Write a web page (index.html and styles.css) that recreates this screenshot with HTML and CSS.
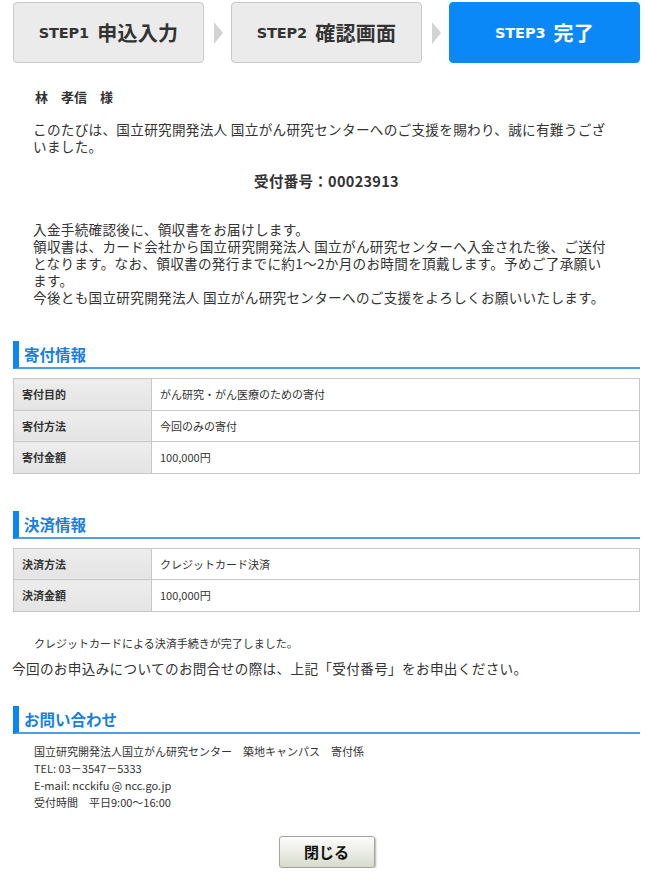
FILE: index.html
```html
<!DOCTYPE html>
<html lang="ja">
<head>
<meta charset="utf-8">
<title>完了</title>
<link rel="stylesheet" href="styles.css">
</head>
<body>
<div class="page">
  <ol class="steps">
    <li class="step"><span class="step-no">STEP1</span><span class="step-name">申込入力</span></li>
    <li class="arrow" aria-hidden="true"></li>
    <li class="step"><span class="step-no">STEP2</span><span class="step-name">確認画面</span></li>
    <li class="arrow" aria-hidden="true"></li>
    <li class="step step-current"><span class="step-no">STEP3</span><span class="step-name">完了</span></li>
  </ol>

  <div class="intro">
    <p class="name">林　孝信　様</p>
    <p class="text">このたびは、国立研究開発法人 国立がん研究センターへのご支援を賜わり、誠に有難うござ<br>いました。</p>
    <p class="receipt">受付番号：00023913</p>
    <p class="text notice">入金手続確認後に、領収書をお届けします。<br>領収書は、カード会社から国立研究開発法人 国立がん研究センターへ入金された後、ご送付<br>となります。なお、領収書の発行までに約1～2か月のお時間を頂戴します。予めご了承願い<br>ます。<br>今後とも国立研究開発法人 国立がん研究センターへのご支援をよろしくお願いいたします。</p>
  </div>

  <h2 class="section-title first">寄付情報</h2>
  <table class="info">
    <tr><th>寄付目的</th><td>がん研究・がん医療のための寄付</td></tr>
    <tr><th>寄付方法</th><td>今回のみの寄付</td></tr>
    <tr><th>寄付金額</th><td>100,000円</td></tr>
  </table>

  <h2 class="section-title">決済情報</h2>
  <table class="info">
    <tr><th>決済方法</th><td>クレジットカード決済</td></tr>
    <tr><th>決済金額</th><td>100,000円</td></tr>
  </table>

  <p class="done">クレジットカードによる決済手続きが完了しました。</p>
  <p class="inquiry">今回のお申込みについてのお問合せの際は、上記「受付番号」をお申出ください。</p>

  <h2 class="section-title contact-title">お問い合わせ</h2>
  <div class="contact">
    <p>国立研究開発法人国立がん研究センター　築地キャンパス　寄付係</p>
    <p>TEL: 03－3547－5333</p>
    <p>E-mail: ncckifu @ ncc.go.jp</p>
    <p>受付時間　平日9:00～16:00</p>
  </div>

  <div class="actions">
    <button type="button" class="close-btn">閉じる</button>
  </div>
</div>
</body>
</html>
```

FILE: styles.css
```css
* {
  box-sizing: border-box;
}

html, body {
  margin: 0;
  padding: 0;
  background: #ffffff;
}

body {
  font-family: "Noto Sans CJK JP", "Noto Sans", sans-serif;
  color: #333333;
  font-size: 13.6px;
}

p {
  margin: 0;
}

.page {
  width: 640px;
  padding: 2px 0 0 13px;
}

/* steps */
.steps {
  list-style: none;
  margin: 0;
  padding: 0;
  display: flex;
  width: 627px;
  height: 61px;
}

.step {
  flex: 0 0 191px;
  display: flex;
  align-items: center;
  justify-content: center;
  background: #ebebeb;
  border: 1px solid #c9c9c9;
  border-radius: 4px;
  color: #333333;
  font-weight: bold;
}

.step-current {
  background: #0a88f8;
  border-color: #0a88f8;
  color: #ffffff;
}

.step-no {
  font-family: "DejaVu Sans", sans-serif;
  font-size: 14.5px;
  margin-right: 8px;
  letter-spacing: -0.1px;
}

.step-name {
  font-size: 20px;
  line-height: 1;
  letter-spacing: 0.3px;
}

.arrow {
  flex: 0 0 27px;
  display: flex;
  align-items: center;
  justify-content: center;
}

.arrow::before {
  content: "";
  width: 0;
  height: 0;
  border-top: 11px solid transparent;
  border-bottom: 11px solid transparent;
  border-left: 9px solid #d3d3d3;
  margin-left: 1px;
}

/* intro */
.intro {
  padding-left: 20px;
  line-height: 17px;
}

.name {
  margin-top: 25px;
  padding-left: 2px;
  font-size: 13px;
  font-weight: bold;
}

.text {
  margin-top: 16px;
  white-space: nowrap;
  letter-spacing: 0.3px;
}

.receipt {
  margin-top: 17px;
  margin-left: -20px;
  text-align: center;
  font-size: 14.5px;
  font-weight: bold;
  letter-spacing: 0.3px;
  width: 627px;
}

.notice {
  margin-top: 32px;
  line-height: 17px;
}

/* section titles */
.section-title {
  margin: 35px 0 0;
  width: 627px;
  height: 28px;
  line-height: 26px;
  padding-left: 5px;
  border-left: 6px solid #0a86f2;
  border-bottom: 2px solid #4a9fe8;
  color: #1a7fe0;
  font-size: 15.5px;
  font-weight: bold;
}

.section-title + .info {
  margin-top: 9px;
}

.info + .section-title {
  margin-top: 37px;
}

.contact-title {
  margin-top: 29px;
}

/* tables */
.info {
  width: 627px;
  border-collapse: collapse;
  font-size: 11px;
}

.info th,
.info td {
  height: 31.5px;
  border: 1px solid #c8c8c8;
  padding: 0 8px;
  text-align: left;
  vertical-align: middle;
}

.info th {
  width: 138px;
  background: linear-gradient(#ededed, #e4e4e4);
  font-weight: bold;
  color: #333333;
}

.info td {
  background: #ffffff;
  font-weight: normal;
}

/* messages */
.done {
  margin-top: 23px;
  padding-left: 21px;
  font-size: 11px;
  line-height: 17px;
}

.inquiry {
  margin-top: 8px;
  margin-left: -1px;
  line-height: 17px;
  letter-spacing: 0.35px;
}

/* contact */
.contact {
  margin-top: 9px;
  padding-left: 21px;
  font-size: 11px;
  line-height: 17px;
}

/* button */
.actions {
  width: 627px;
  display: flex;
  justify-content: center;
  margin-top: 25px;
}

.close-btn {
  width: 96px;
  height: 32px;
  border: 1px solid #a3a59d;
  border-radius: 3px;
  background: linear-gradient(#fdfdfb, #e9ebe3 55%, #d6dbcc);
  box-shadow: 1px 1px 2px rgba(0, 0, 0, 0.3);
  font-family: "Noto Sans CJK JP", sans-serif;
  font-size: 15px;
  font-weight: bold;
  color: #111111;
  padding: 0;
  cursor: pointer;
}
```
